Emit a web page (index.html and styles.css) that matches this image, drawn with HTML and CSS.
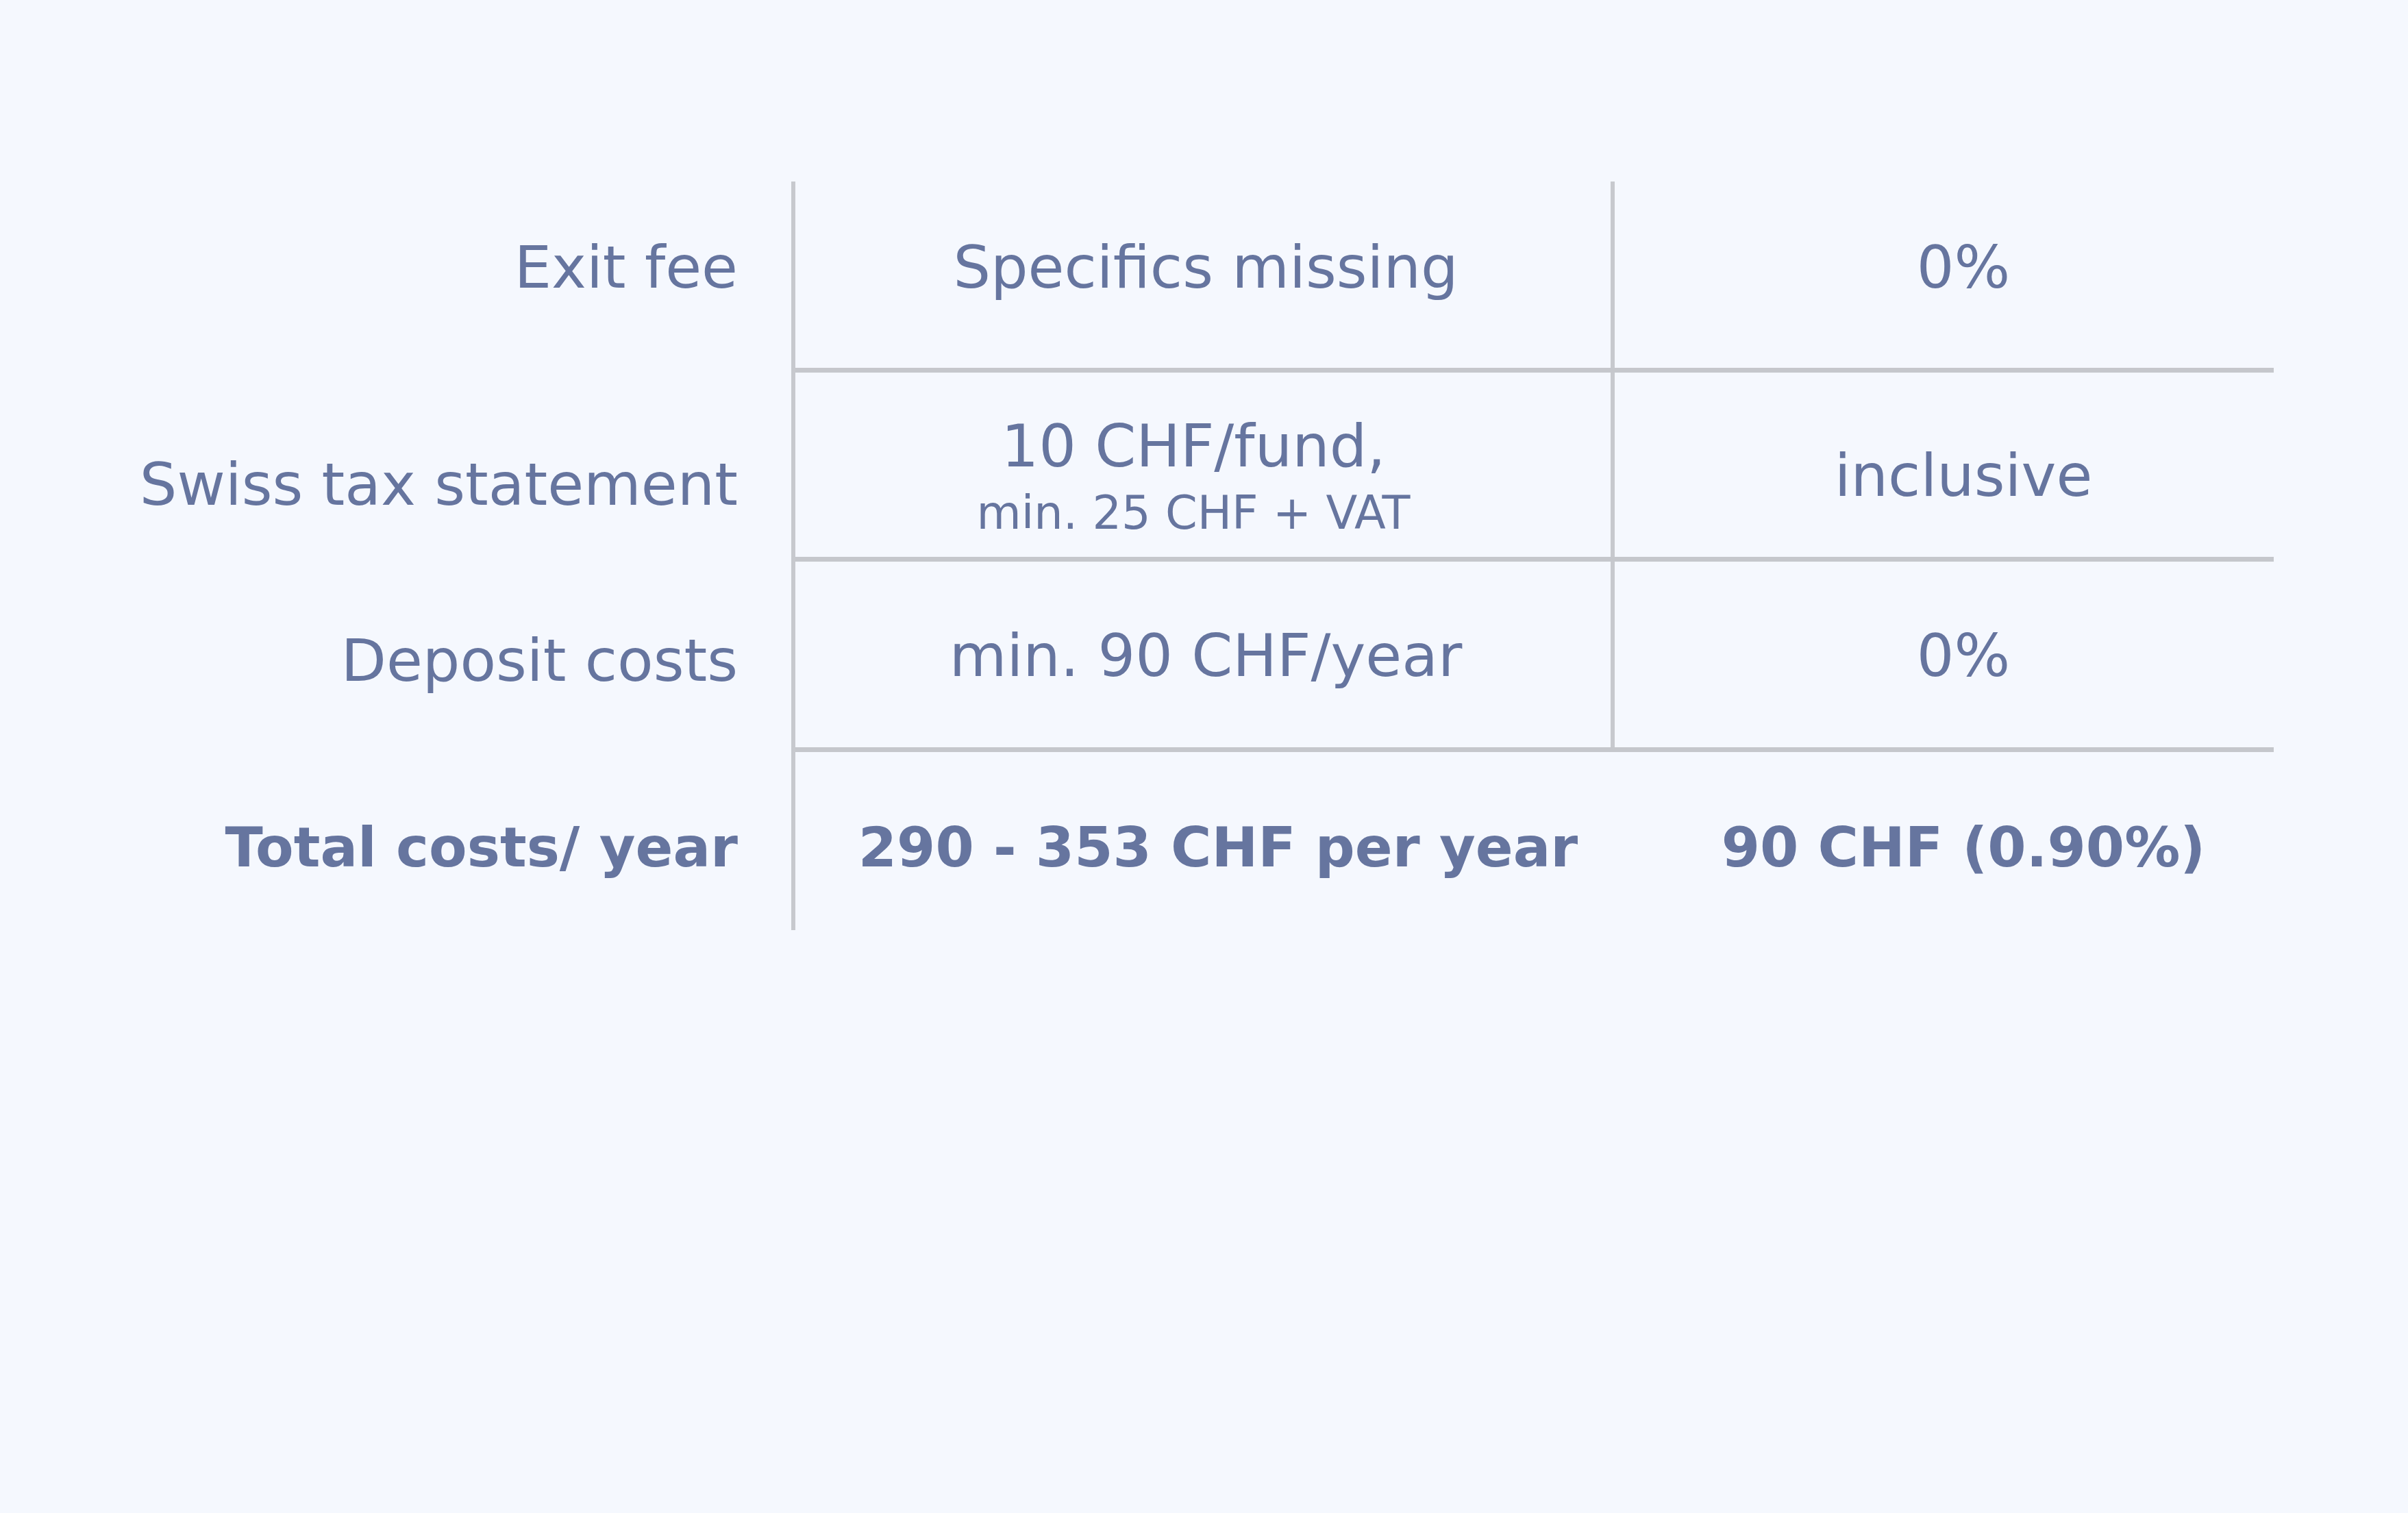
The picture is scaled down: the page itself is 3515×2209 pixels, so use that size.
FILE: index.html
```html
<!DOCTYPE html>
<html lang="en">
<head>
<meta charset="utf-8">
<title>Costs comparison</title>
<link rel="stylesheet" href="styles.css">
</head>
<body>
<div class="table">
  <div class="row row-1">
    <div class="label">Exit fee</div>
    <div class="cells">
      <div class="c2"><div class="txt">Specifics missing</div></div>
      <div class="c3"><div class="txt">0%</div></div>
    </div>
  </div>
  <div class="row row-2">
    <div class="label">Swiss tax statement</div>
    <div class="cells">
      <div class="c2"><div class="txt">10 CHF/fund,</div><div class="sub">min. 25 CHF + VAT</div></div>
      <div class="c3"><div class="txt">inclusive</div></div>
    </div>
  </div>
  <div class="row row-3">
    <div class="label">Deposit costs</div>
    <div class="cells">
      <div class="c2"><div class="txt">min. 90 CHF/year</div></div>
      <div class="c3"><div class="txt">0%</div></div>
    </div>
  </div>
  <div class="row row-4 total">
    <div class="label">Total costs/ year</div>
    <div class="cells">
      <div class="c2"><div class="txt">290 - 353 CHF per year</div></div>
      <div class="c3"><div class="txt">90 CHF (0.90%)</div></div>
    </div>
  </div>
</div>
</body>
</html>
```
FILE: styles.css
```css
html, body {
  margin: 0;
  padding: 0;
  background: #f5f8fe;
}
body {
  font-family: "DejaVu Sans", "Liberation Sans", sans-serif;
  color: #66759f;
  font-size: 86px;
  line-height: 100px;
  font-weight: 400;
}
.table {
  display: flex;
  flex-direction: column;
  width: 3319px;
  margin-top: 265px;
}
.row {
  display: flex;
}
.label {
  box-sizing: border-box;
  width: 1161px;
  flex: none;
  padding-right: 78px;
  border-right: 6px solid #c7c9ce;
  text-align: right;
  white-space: nowrap;
}
.cells {
  flex: 1;
  display: flex;
  border-bottom: 7px solid #c5c7cc;
}
.c2 {
  box-sizing: border-box;
  width: 1196px;
  flex: none;
  padding-left: 8px;
  border-right: 6px solid #c7c9ce;
  text-align: center;
  white-space: nowrap;
}
.c3 {
  flex: 1;
  padding-left: 56px;
  text-align: center;
  white-space: nowrap;
}
.sub {
  font-size: 67px;
  line-height: 80px;
  margin-top: 8px;
}

/* row 1 */
.row-1 .cells { height: 272px; }
.row-1 .label { padding-top: 75px; }
.row-1 .c2, .row-1 .c3 { padding-top: 75px; }

/* row 2 */
.row-2 .cells { height: 269px; }
.row-2 .label { padding-top: 113px; }
.row-2 .c2 { padding-top: 57px; padding-right: 36px; }
.row-2 .c3 { padding-top: 100px; }

/* row 3 */
.row-3 .cells { height: 271px; }
.row-3 .label { padding-top: 94px; }
.row-3 .c2, .row-3 .c3 { padding-top: 87px; }

/* row 4 */
.total { font-weight: 700; font-size: 81px; }
.row-4 .cells { height: 260px; border-bottom: none; }
.row-4 .label { padding-top: 89px; }
.row-4 .c2 { padding-top: 89px; padding-left: 44px; border-right-color: transparent; }
.row-4 .c3 { padding-top: 89px; }
```
